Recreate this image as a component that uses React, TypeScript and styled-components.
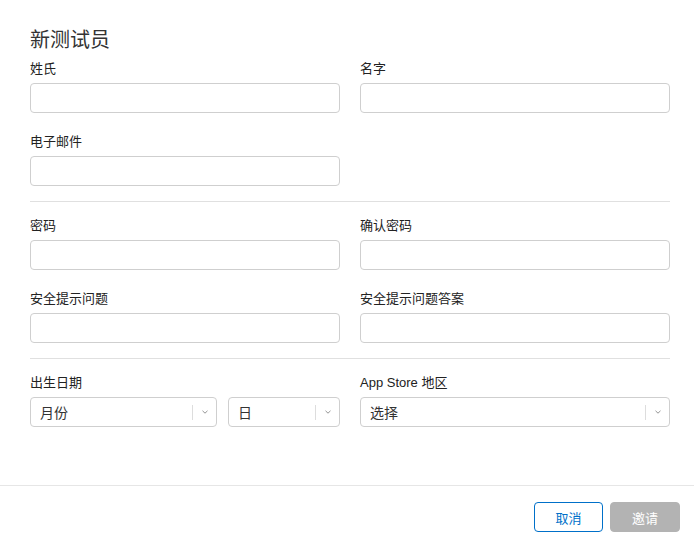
import React from "react";
import styled, { createGlobalStyle } from "styled-components";

const Global = createGlobalStyle`
  html, body { margin: 0; padding: 0; background: #fff; }
  body { font-family: "Liberation Sans", "Noto Sans CJK SC", sans-serif; color: #333; }
  * { box-sizing: border-box; }
`;

const Page = styled.div`
  min-height: 100vh;
  display: flex;
  flex-direction: column;
`;

const Form = styled.div`
  flex: 1;
  padding: 28px 24px 0 30px;
  width: 694px;
`;

const Title = styled.h1`
  margin: 0 0 8px;
  font-size: 20px;
  line-height: 24px;
  font-weight: 400;
  color: #333;
  width: 640px;
`;

const Section = styled.div`
  display: grid;
  grid-template-columns: 310px 310px;
  column-gap: 20px;
  row-gap: 20px;
  width: 640px;
`;

const Divider = styled.hr`
  border: none;
  border-top: 1px solid #e0e0e0;
  margin: 15px 0 15px;
  width: 640px;
  height: 0;
`;

const Field = styled.div`
  display: flex;
  flex-direction: column;
  gap: 5px;
`;

const Label = styled.label`
  font-size: 13px;
  line-height: 18px;
  font-weight: 400;
  color: #222;
`;

const Input = styled.input`
  height: 30px;
  width: 100%;
  border: 1px solid #cfcfcf;
  border-radius: 4px;
  padding: 0 10px;
  font-size: 14px;
  font-family: inherit;
  background: #fff;
  outline: none;
`;

const SelectRow = styled.div`
  display: flex;
  gap: 11px;
`;

const Select = styled.div<{ $w: number }>`
  position: relative;
  width: ${(p) => p.$w}px;
  height: 30px;
  border: 1px solid #cfcfcf;
  border-radius: 4px;
  display: flex;
  align-items: center;
  padding-left: 9px;
  font-size: 14px;
  color: #333;
`;

const SelectText = styled.span`
  flex: 1;
`;

const SelectSep = styled.span`
  width: 1px;
  height: 15px;
  background: #ddd;
`;

const Arrow = styled.span`
  width: 23px;
  display: flex;
  justify-content: center;
  align-items: center;
`;

const Footer = styled.div`
  border-top: 1px solid #e6e6e6;
  padding: 16px 14px 7px;
  display: flex;
  justify-content: flex-end;
  gap: 7px;
`;

const Button = styled.button<{ $primary?: boolean }>`
  width: ${(p) => (p.$primary ? 70 : 69)}px;
  height: 30px;
  border-radius: 4px;
  font-family: inherit;
  font-size: 13px;
  cursor: pointer;
  border: 1px solid ${(p) => (p.$primary ? "#b3b3b3" : "#0070c9")};
  background: ${(p) => (p.$primary ? "#b3b3b3" : "#fff")};
  color: ${(p) => (p.$primary ? "#fff" : "#0070c9")};
`;

const Chevron = () => (
  <svg width="6" height="4" viewBox="0 0 6 4">
    <path d="M0.5 0.8 L3 3.2 L5.5 0.8" fill="none" stroke="#888" strokeWidth="0.9" />
  </svg>
);

const SelectBox = ({ w, text }: { w: number; text: string }) => (
  <Select $w={w}>
    <SelectText>{text}</SelectText>
    <SelectSep />
    <Arrow>
      <Chevron />
    </Arrow>
  </Select>
);

export default function App() {
  return (
    <Page>
      <Global />
      <Form>
        <Title>新测试员</Title>
        <Section>
          <Field>
            <Label>姓氏</Label>
            <Input />
          </Field>
          <Field>
            <Label>名字</Label>
            <Input />
          </Field>
          <Field>
            <Label>电子邮件</Label>
            <Input />
          </Field>
        </Section>
        <Divider />
        <Section>
          <Field>
            <Label>密码</Label>
            <Input type="password" />
          </Field>
          <Field>
            <Label>确认密码</Label>
            <Input type="password" />
          </Field>
          <Field>
            <Label>安全提示问题</Label>
            <Input />
          </Field>
          <Field>
            <Label>安全提示问题答案</Label>
            <Input />
          </Field>
        </Section>
        <Divider />
        <Section>
          <Field>
            <Label>出生日期</Label>
            <SelectRow>
              <SelectBox w={187} text="月份" />
              <SelectBox w={112} text="日" />
            </SelectRow>
          </Field>
          <Field>
            <Label>App Store 地区</Label>
            <SelectBox w={310} text="选择" />
          </Field>
        </Section>
      </Form>
      <Footer>
        <Button>取消</Button>
        <Button $primary>邀请</Button>
      </Footer>
    </Page>
  );
}
